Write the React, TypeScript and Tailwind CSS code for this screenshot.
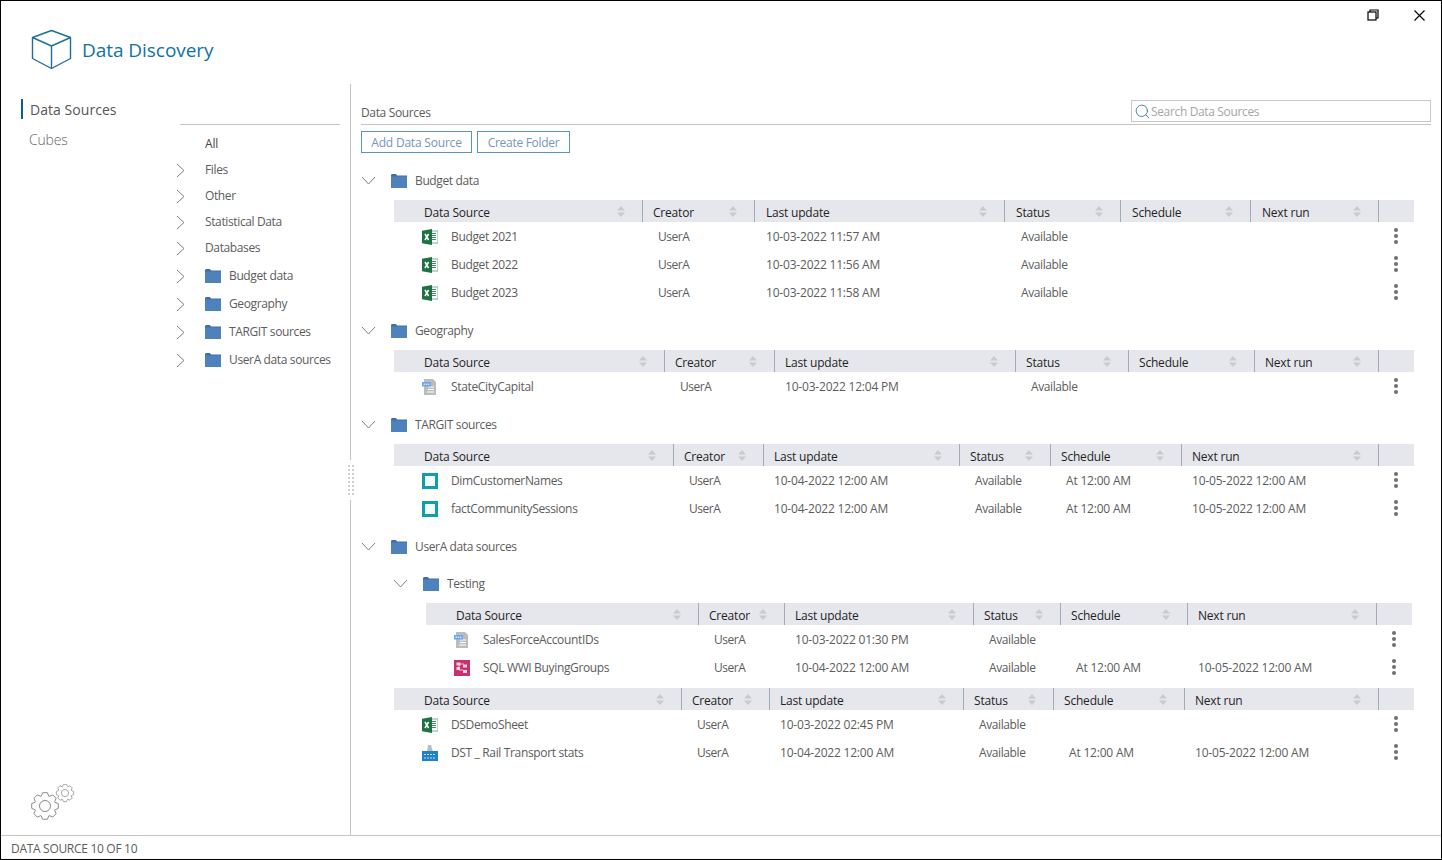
import { Search } from 'lucide-react';

type Kind = 'excel' | 'csv' | 'cube' | 'sql' | 'dst';

interface Source {
  name: string;
  kind: Kind;
  updated: string;
  schedule?: string;
  nextRun?: string;
}

const NEXT = '10-05-2022 12:00 AM';

const BUDGET: Source[] = [
  { name: 'Budget 2021', kind: 'excel', updated: '10-03-2022 11:57 AM' },
  { name: 'Budget 2022', kind: 'excel', updated: '10-03-2022 11:56 AM' },
  { name: 'Budget 2023', kind: 'excel', updated: '10-03-2022 11:58 AM' },
];
const GEOGRAPHY: Source[] = [{ name: 'StateCityCapital', kind: 'csv', updated: '10-03-2022 12:04 PM' }];
const TARGIT: Source[] = [
  { name: 'DimCustomerNames', kind: 'cube', updated: '10-04-2022 12:00 AM', schedule: 'At 12:00 AM', nextRun: NEXT },
  { name: 'factCommunitySessions', kind: 'cube', updated: '10-04-2022 12:00 AM', schedule: 'At 12:00 AM', nextRun: NEXT },
];
const TESTING: Source[] = [
  { name: 'SalesForceAccountIDs', kind: 'csv', updated: '10-03-2022 01:30 PM' },
  { name: 'SQL WWI BuyingGroups', kind: 'sql', updated: '10-04-2022 12:00 AM', schedule: 'At 12:00 AM', nextRun: NEXT },
];
const USER_A: Source[] = [
  { name: 'DSDemoSheet', kind: 'excel', updated: '10-03-2022 02:45 PM' },
  { name: 'DST _ Rail Transport stats', kind: 'dst', updated: '10-04-2022 12:00 AM', schedule: 'At 12:00 AM', nextRun: NEXT },
];

const HEADERS = ['Data Source', 'Creator', 'Last update', 'Status', 'Schedule', 'Next run'];

function FolderIcon() {
  return (
    <svg width="16" height="14" viewBox="0 0 16 14" className="shrink-0">
      <path d="M0 1.5C0 .7.6 0 1.4 0h3.4l1.4 1.6H16V3H0z" fill="#3f6fa6" />
      <rect x="0" y="2.6" width="16" height="11.4" rx="0.6" fill="#4f81bd" />
    </svg>
  );
}

function SortIcon() {
  return (
    <svg width="8" height="11" viewBox="0 0 8 11" className="shrink-0">
      <path d="M4 0l4 4.6H0zM4 11L0 6.4h8z" fill="#c8cace" />
    </svg>
  );
}

function ChevronRight() {
  return (
    <svg width="9" height="15" viewBox="0 0 9 15" fill="none" stroke="#7d7d7d" className="ml-[1px] block">
      <path d="M1 1l7 6.5L1 14" />
    </svg>
  );
}

function ChevronDown() {
  return (
    <svg width="15" height="9" viewBox="0 0 15 9" fill="none" stroke="#7d7d7d" className="mb-[2px] block">
      <path d="M1 1l6.5 7L14 1" />
    </svg>
  );
}

function SourceIcon({ kind }: { kind: Kind }) {
  if (kind === 'cube') return <span className="block h-[16px] w-[16px] border-[3px] border-[#0f9db0] bg-[#f4fbfc]" />;
  if (kind === 'excel') {
    return (
      <svg width="16" height="16" viewBox="0 0 16 16" className="block">
        <rect x="8" y="2" width="8" height="12" fill="#fff" stroke="#7fae93" />
        <path d="M10 4.5h4M10 6.5h4M10 8.5h4M10 10.5h4" stroke="#3f8a5f" />
        <path d="M0 1.8L10 0v16L0 14.2z" fill="#1e7145" />
        <path d="M3 5l3.6 6M6.6 5L3 11" stroke="#fff" strokeWidth="1.5" />
      </svg>
    );
  }
  if (kind === 'csv') {
    return (
      <svg width="16" height="16" viewBox="0 0 16 16" className="block">
        <path d="M2 0h9l3 3v13H2z" fill="#bcbcbc" />
        <path d="M6 8h6M6 10.5h6M5 13h7" stroke="#fff" />
        <rect x="0" y="3" width="9" height="4.5" fill="#6aa9e8" />
        <path d="M1.5 5.2h6" stroke="#fff" strokeDasharray="1.5 .7" />
      </svg>
    );
  }
  if (kind === 'sql') {
    return (
      <svg width="16" height="16" viewBox="0 0 16 16" className="block">
        <rect width="16" height="16" fill="#c8316d" />
        <path d="M5 5v5h4M5 4h5" stroke="#f3bcd2" fill="none" />
        <rect x="2.5" y="2.5" width="4" height="3" fill="#f7d3e1" />
        <rect x="2.5" y="7" width="3.5" height="3" fill="#f7d3e1" />
        <rect x="9" y="4.5" width="4" height="3" fill="#f7d3e1" />
        <rect x="9" y="10" width="4" height="3" fill="#f7d3e1" />
      </svg>
    );
  }
  return (
    <svg width="16" height="16" viewBox="0 0 16 16" className="block">
      <path d="M6 0h3l2 7H5z" fill="#b9bdc2" />
      <rect y="6" width="16" height="10" fill="#1f80cc" />
      <path d="M2 9.5h12M2 13h12" stroke="#bfe0f5" strokeDasharray="2 1" />
    </svg>
  );
}

function MoreDots() {
  return (
    <span className="mb-[2px] mr-[2px] flex flex-col gap-[2px]">
      <span className="h-[4px] w-[4px] rounded-full bg-[#6f6f6f]" />
      <span className="h-[4px] w-[4px] rounded-full bg-[#6f6f6f]" />
      <span className="h-[4px] w-[4px] rounded-full bg-[#6f6f6f]" />
    </span>
  );
}

function SourceTable({ grid, rows, narrow, inset }: { grid: string; rows: Source[]; narrow?: boolean; inset?: boolean }) {
  const headPad = inset ? 'pl-[11px]' : 'pl-[10px]';
  const softPad = inset ? 'pl-[16px]' : 'pl-[15px]';
  return (
    <div className={narrow ? 'w-[986px]' : 'w-[1020px]'}>
      <div className={`grid h-[22px] bg-[#e6e7ec] ${grid}`}>
        {HEADERS.map((h, i) => (
          <div
            key={h}
            className={`flex items-center justify-between border-r border-[#a3abb6] pr-[17px] text-[12px] font-medium text-[#1f1f1f] ${i === 0 ? 'pl-[30px]' : i === 1 ? 'pl-[10px]' : headPad}`}
          >
            <span className="pt-[4px]">{h}</span>
            <SortIcon />
          </div>
        ))}
        <div />
      </div>
      <div className="mt-px">
        {rows.map(r => (
          <div key={r.name} className={`grid h-[28px] items-center text-[12px] text-[#5c5c5c] ${grid}`}>
            <div className="flex items-center pl-[28px] tracking-[-0.35px]">
              <span className="mr-[13px] w-[16px] shrink-0">
                <SourceIcon kind={r.kind} />
              </span>
              {r.name}
            </div>
            <div className="pl-[15px] tracking-[-0.45px]">UserA</div>
            <div className={headPad}>{r.updated}</div>
            <div className={`${softPad} tracking-[-0.4px]`}>Available</div>
            <div className={softPad}>{r.schedule}</div>
            <div className={headPad}>{r.nextRun}</div>
            <div className="flex justify-center">
              <MoreDots />
            </div>
          </div>
        ))}
      </div>
    </div>
  );
}

function GroupHeading({ label }: { label: string }) {
  return (
    <div className="flex h-[22px] items-center text-[12px] tracking-[-0.37px] text-[#5c5c5c]">
      <span className="w-[30px]">
        <ChevronDown />
      </span>
      <FolderIcon />
      <span className="ml-[8px]">{label}</span>
    </div>
  );
}

function TreeRow({ label, folder, top }: { label: string; folder?: boolean; top?: boolean }) {
  return (
    <div className={`flex items-center text-[12px] tracking-[-0.37px] text-[#5c5c5c] ${folder ? 'h-[28px]' : 'h-[26px]'} ${top ? 'mt-px' : ''}`}>
      <span className="w-[30px]">
        <ChevronRight />
      </span>
      {folder && <FolderIcon />}
      <span className={folder ? 'ml-[8px]' : ''}>{label}</span>
    </div>
  );
}

function Gears() {
  const gear = (cx: number, cy: number, ro: number, ri: number) => {
    const pts: string[] = [];
    for (let i = 0; i < 8; i++) {
      const a = (i * Math.PI) / 4;
      const s = Math.PI / 8;
      for (const [r, d] of [[ri, -s * 0.95], [ro, -s * 0.45], [ro, s * 0.45], [ri, s * 0.95]]) {
        pts.push(`${(cx + r * Math.cos(a + d)).toFixed(2)},${(cy + r * Math.sin(a + d)).toFixed(2)}`);
      }
    }
    return pts.join(' ');
  };
  return (
    <svg width="44" height="36" viewBox="0 0 44 36" fill="none" stroke="#8a8a8a" strokeWidth="1">
      <polygon points={gear(14, 22, 13.5, 10.5)} strokeLinejoin="round" />
      <circle cx="14" cy="22" r="5.5" />
      <polygon points={gear(34, 9, 8.8, 6.8)} strokeLinejoin="round" stroke="#a8a8a8" />
      <circle cx="34" cy="9" r="3.6" stroke="#a8a8a8" />
    </svg>
  );
}

export default function App() {
  return (
    <div className="flex h-[860px] w-[1442px] flex-col overflow-hidden border border-black bg-white font-['Open_Sans',sans-serif] tracking-[-0.2px]">
      <header className="flex h-[83px] shrink-0 items-start justify-between">
        <div className="flex items-center pl-[30px] pt-[28px]">
          <svg width="41" height="41" viewBox="0 0 41 41" fill="none" stroke="#1f6f94" strokeWidth="1.4" strokeLinejoin="round">
            <path d="M20.5 1.5L1.5 8.5v21l19 10 19-10v-21zM1.5 8.5l19 8.5 19-8.5M20.5 17v22.5" />
          </svg>
          <span className="ml-[10px] pt-[2px] text-[19px] tracking-[-0.05px] text-[#0f73a0]">Data Discovery</span>
        </div>
        <div className="flex items-center gap-[35px] pr-[16px] pt-[8px]">
          <svg width="12" height="12" viewBox="0 0 12 12" fill="none" stroke="#000" strokeWidth="1.2">
            <rect x="1" y="3" width="8" height="8" />
            <path d="M3 3V1h8v8H9" />
          </svg>
          <svg width="11" height="11" viewBox="0 0 11 11" fill="none" stroke="#000" strokeWidth="1.1">
            <path d="M.5.5l10 10M10.5.5l-10 10" />
          </svg>
        </div>
      </header>

      <div className="flex min-h-0 flex-1">
        <aside className="relative flex w-[350px] shrink-0 flex-col border-r border-[#c4c4c4]">
          <div className="flex flex-1">
            <nav className="w-[174px] shrink-0 pl-[20px] pt-[15px]">
              <div className="flex h-[20px] items-center border-l-[2px] border-[#0b6285] pl-[7px] text-[14px] tracking-[0.05px] text-[#555]">Data Sources</div>
              <div className="mt-[10px] flex h-[20px] items-center pl-[8px] text-[14px] font-light tracking-[-0.2px] text-[#666]">Cubes</div>
            </nav>
            <div className="w-[165px] pt-[40px]">
              <div className="ml-[5px] h-px bg-[#c4c4c4]" />
              <div className="mt-[5px] flex h-[27px] items-center pl-[30px] text-[12px] font-medium text-[#444]">All</div>
              <TreeRow label="Files" />
              <TreeRow label="Other" />
              <TreeRow label="Statistical Data" />
              <TreeRow label="Databases" />
              <TreeRow label="Budget data" folder top />
              <TreeRow label="Geography" folder />
              <TreeRow label="TARGIT sources" folder />
              <TreeRow label="UserA data sources" folder />
            </div>
          </div>
          <div className="pb-[15px] pl-[30px]">
            <Gears />
          </div>
          <div className="absolute right-[-4px] top-[376px] grid w-[6px] grid-cols-2 gap-x-[1px] gap-y-[2px] bg-white py-[5px]">
            {Array.from({ length: 16 }, (_, i) => (
              <span key={i} className="h-[2px] w-[2px] bg-[#cfcfcf]" />
            ))}
          </div>
        </aside>

        <main className="min-w-0 flex-1 pl-[10px] pr-[10px]">
          <div className="mt-[16px] flex h-[25px] items-start justify-between border-b border-[#c4c4c4]">
            <span className="pt-[4px] text-[12px] tracking-[-0.35px] text-[#5c5c5c]">Data Sources</span>
            <div className="flex h-[22px] w-[300px] items-center border border-[#c4c8cc] pl-[2px] text-[12px] tracking-[-0.35px] text-[#a5a5a5]">
              <Search size={17} strokeWidth={1.2} className="text-[#2a6f94]" />
              <span className="pt-[2px]">Search Data Sources</span>
            </div>
          </div>

          <div className="mt-[6px] flex gap-[5px]">
            <button className="flex h-[22px] w-[111px] items-center justify-center border border-[#5b93c4] pt-[2px] text-[12px] tracking-[-0.2px] text-[#7595bd]">Add Data Source</button>
            <button className="flex h-[22px] w-[93px] items-center justify-center border border-[#5b93c4] pt-[2px] text-[12px] tracking-[-0.3px] text-[#7595bd]">Create Folder</button>
          </div>

          <section className="mt-[17px]">
            <GroupHeading label="Budget data" />
            <div className="ml-[33px] mt-[8px]">
              <SourceTable inset grid="grid-cols-[249px_112px_250px_116px_130px_128px_35px]" rows={BUDGET} />
            </div>
          </section>

          <section className="mt-[13px]">
            <GroupHeading label="Geography" />
            <div className="ml-[33px] mt-[8px]">
              <SourceTable grid="grid-cols-[271px_110px_241px_113px_126px_124px_35px]" rows={GEOGRAPHY} />
            </div>
          </section>

          <section className="mt-[13px]">
            <GroupHeading label="TARGIT sources" />
            <div className="ml-[33px] mt-[8px]">
              <SourceTable grid="grid-cols-[280px_90px_196px_91px_131px_197px_35px]" rows={TARGIT} />
            </div>
          </section>

          <section className="mt-[13px]">
            <GroupHeading label="UserA data sources" />
            <div className="ml-[32px] mt-[15px]">
              <GroupHeading label="Testing" />
              <div className="ml-[33px] mt-[8px]">
                <SourceTable narrow grid="grid-cols-[273px_86px_189px_87px_127px_189px_35px]" rows={TESTING} />
              </div>
            </div>
            <div className="ml-[33px] mt-[6px]">
              <SourceTable grid="grid-cols-[288px_88px_194px_90px_131px_194px_35px]" rows={USER_A} />
            </div>
          </section>
        </main>
      </div>

      <footer className="flex h-[24px] shrink-0 items-center border-t border-[#c4c4c4] pl-[10px] pt-[2px] text-[12px] tracking-[-0.3px] text-[#5c5c5c]">DATA SOURCE 10 OF 10</footer>
    </div>
  );
}
